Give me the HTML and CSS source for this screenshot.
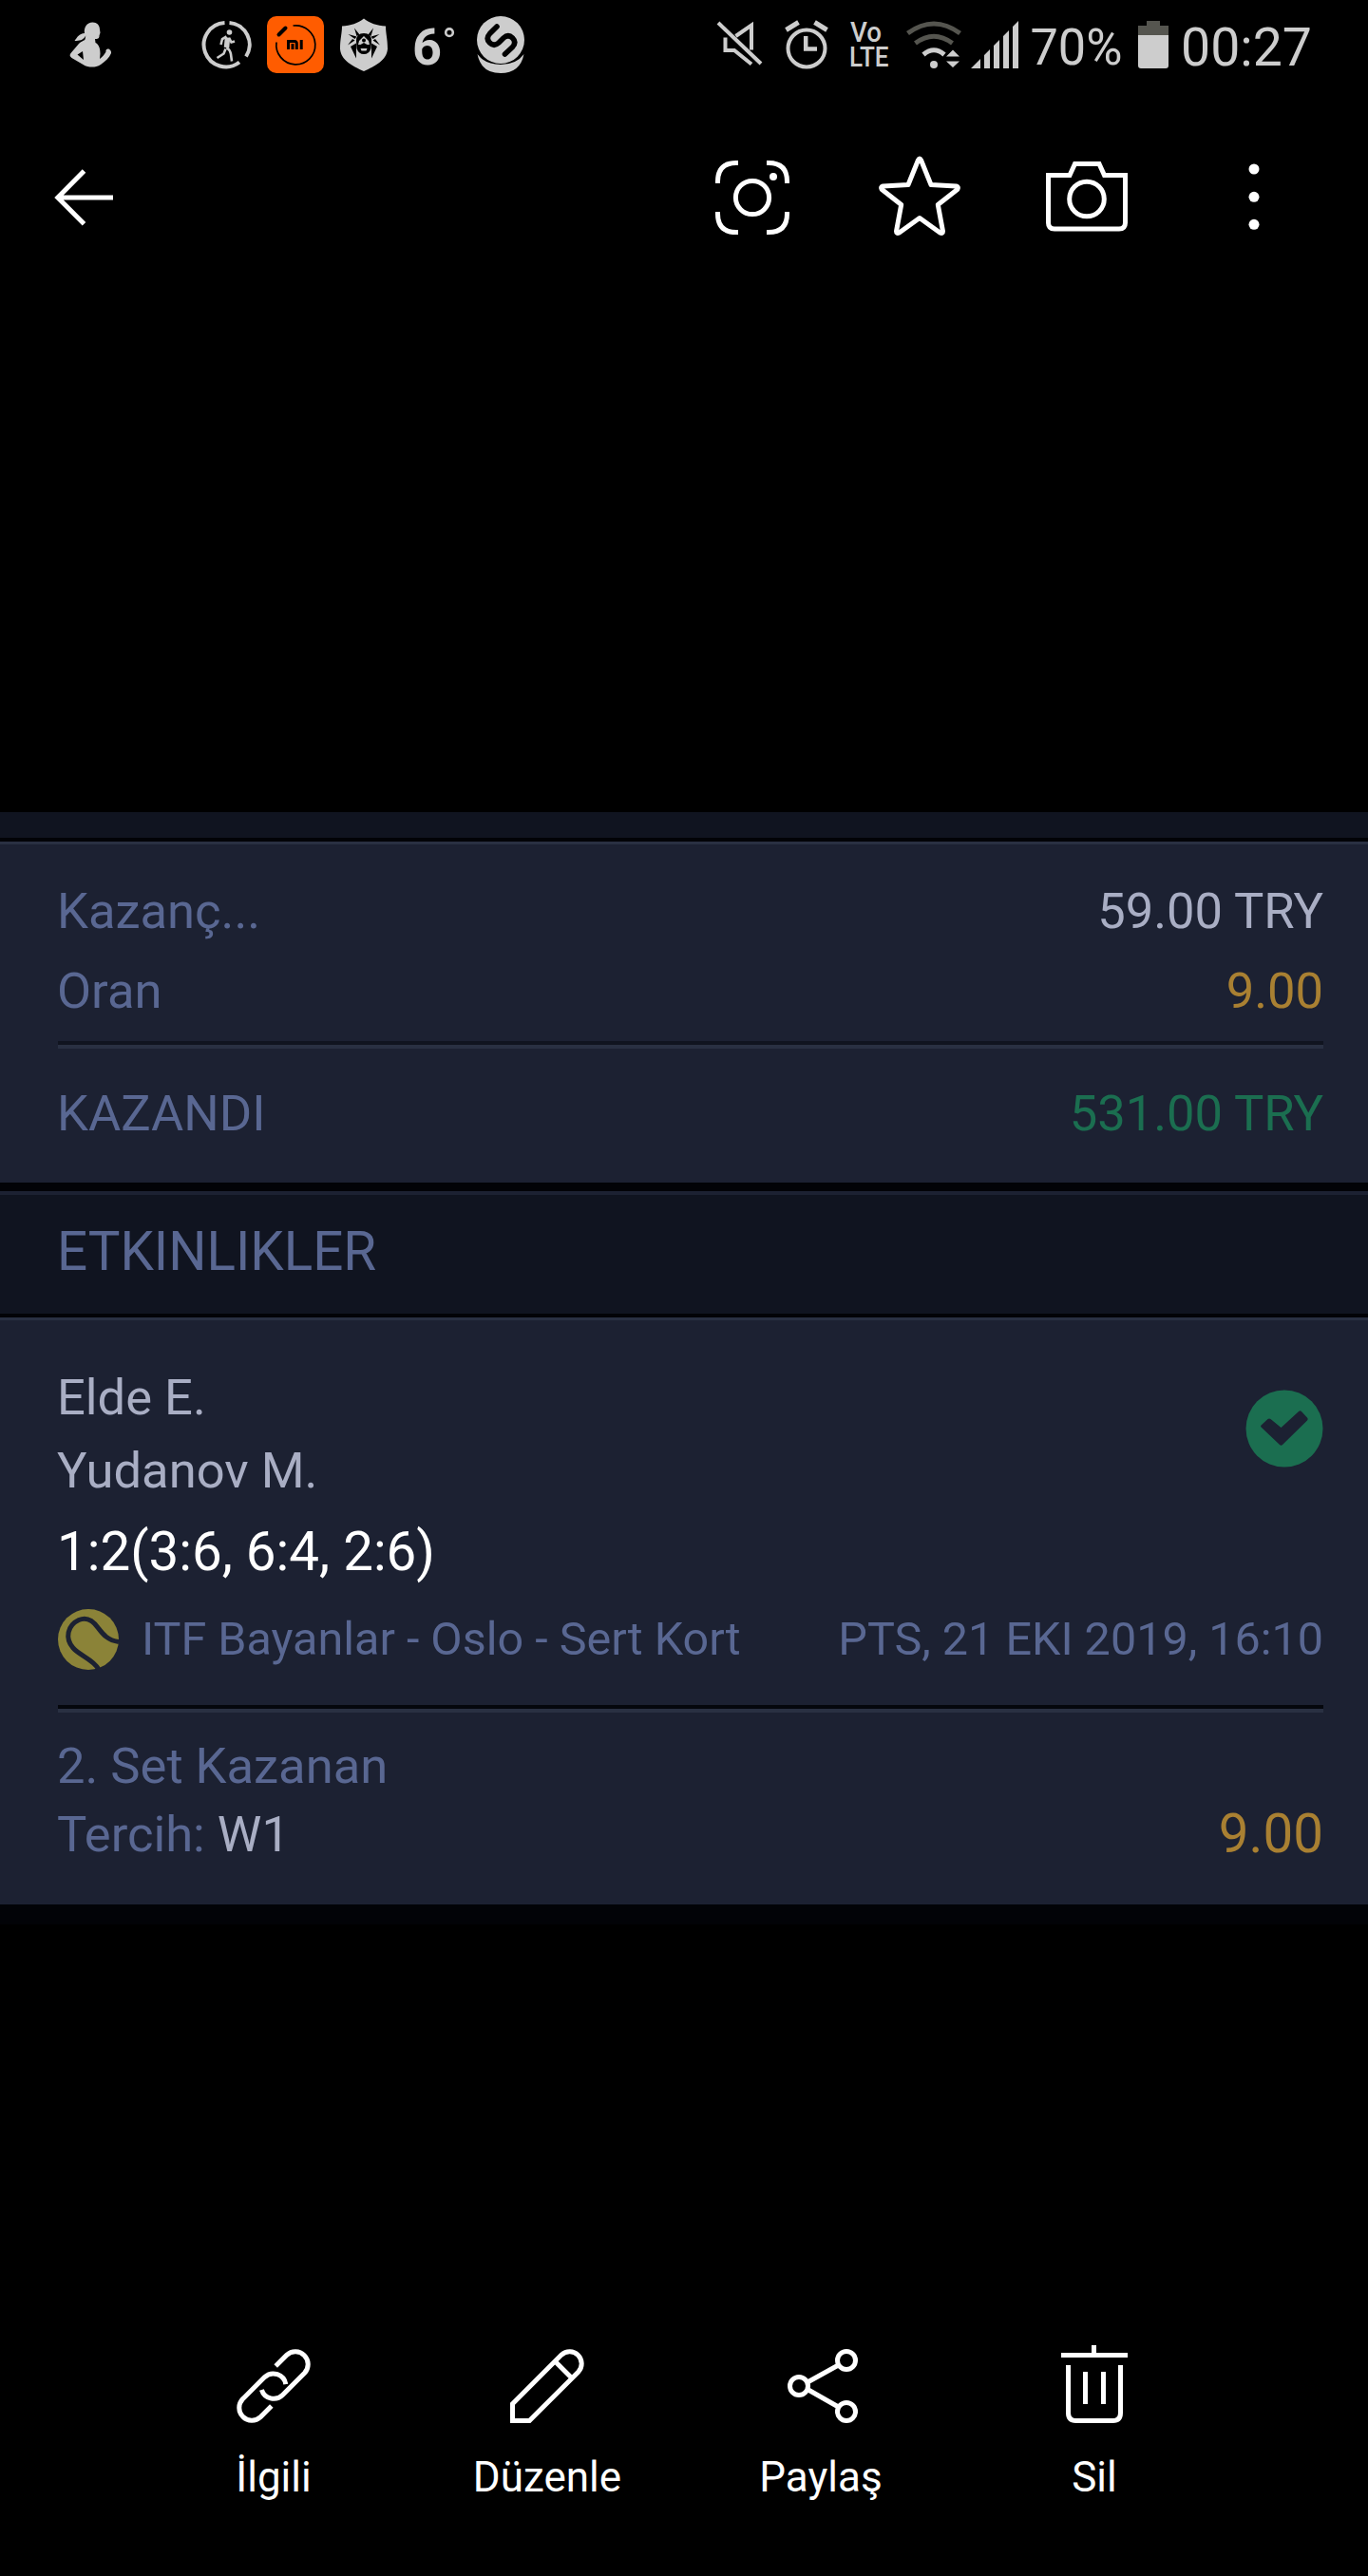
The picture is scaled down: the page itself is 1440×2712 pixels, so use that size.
FILE: index.html
```html
<!DOCTYPE html>
<html lang="tr">
<head>
<meta charset="utf-8">
<title>Galeri</title>
<link rel="stylesheet" href="styles.css">
</head>
<body>
<main class="screen">
  <header class="status">
    <div class="status-group">
      <svg width="48" height="94" viewBox="72 0 48 94" fill="#cdcdcd">
        <path d="M97.500 23.500c4.500 0 7.500 3 7.500 7.500l.5 3.500-1 3c.3 3-2 3.500-4.500 3.500l.5 4c4 2 5 6.500 5 11.500l-.5 5.500c3-2 5-5 6.500-7.500-.5-2.500 1.500-3 3-3 2 1 2.800 3 2.500 4.500-2 5-6 8-11 12-3 2-6 2.500-9 2.500s-7-.5-9.500-2.500L75.500 61c-2-1.500-2.500-3-1-5l8.500-10c3-3 5.500-3 6.500-4.500l.8-4c-3 5-6.500 5.500-11.800 5.500 3-4 4.500-7.500 10.500-8-1-6 2.500-11.500 8.500-11.500zM87 54l-5.500 3.500 6.500 5.500z"/>
      </svg>
      <svg class="gap-lg" width="52" height="94" viewBox="213 0 52 94" fill="none" stroke="#cdcdcd">
        <path d="M241.500 24a23 23 0 0 1 17.500 35.500M252 65.500A23.200 23.200 0 1 1 236.500 24" stroke-width="4"/>
        <circle cx="241.500" cy="34" r="2.800" fill="#cdcdcd" stroke="none"/>
        <path d="M239.500 39.500l-1 10.500" stroke-width="5.500"/>
        <path d="M238.500 38.500l-4.500 2.500-1.500 6M241 40l2.500 4.500 3.500-1M238.500 50c4 3 4 4.500 4.500 7l1 7.500M237.500 51.500l-2 5-7 4.500" stroke-width="2.600"/>
      </svg>
      <svg class="gap-md" width="60" height="94" viewBox="281 0 60 94" fill="none" stroke="#000">
        <rect x="281" y="17" width="60" height="60" rx="10" fill="#ff5c00" stroke="none"/>
        <path d="M308.500 27a20.500 20.500 0 1 1-17.500 17.500" stroke-width="1.700"/>
        <path d="M293.500 36.500l7-7" stroke-width="4" stroke-linecap="round"/>
        <path d="M303.500 52v-8.500h6.500q2.300 0 2.300 2.300V52M308 46v6M317.200 42v10" stroke-width="3"/>
      </svg>
      <svg class="gap-md" width="52" height="94" viewBox="357 0 52 94">
        <path d="M383 19.500c6 5 14 7.500 23 8 0 8 2 13 2 24-1 12-13 18-25 23.500-12-5.500-24-11.500-25-23.500 0-11 2-16 2-24 9-.5 17-3 23-8z" fill="#cdcdcd"/>
        <path d="M373 29.500l5.500 7-3 1.500zM393 29.500l-5.500 7 3 1.500zM366.500 36l9 2.500-2 2.500zM399.500 36l-9 2.500 2 2.500zM366 47.500l5-6.500 2.500 1.500zM400 47.500l-5-6.500-2.500 1.500zM369 49l6-3.500v16zM397 49l-6-3.500v16z" fill="#000"/>
        <path d="M375 43q0-8 8-8t8 8l-.5 8q-2 6-7.500 6t-7.500-6z" fill="#000"/>
        <path d="M378 43l5-5 5 5 1 4h-2.500l-3.500-2-3.500 2H377zM379.500 51h7l-1 2.500h-5z" fill="#cdcdcd"/>
        <circle cx="383" cy="42.500" r="2" fill="#000"/>
      </svg>
      <svg class="gap-lg2" width="50" height="94" viewBox="433 0 50 94" fill="#cdcdcd">
        <text x="434" y="68" class="temp" textLength="31" lengthAdjust="spacingAndGlyphs">6</text>
        <circle cx="473" cy="34.200" r="3.800" fill="none" stroke="#cdcdcd" stroke-width="2.600"/>
      </svg>
      <svg class="gap-sm" width="52" height="94" viewBox="501 0 52 94">
        <circle cx="527" cy="42" r="25" fill="#cdcdcd"/>
        <path d="M502.500 57q8 11 24.500 11t24.500-11q-4 20-24.500 20t-24.500-20z" fill="#cdcdcd"/>
        <path d="M523 28l-7.500 7.500q-4.500 5 0 9.500t9.500 0l5-5q5-4.500 9.500 0t0 9.500l-8 7.500" fill="none" stroke="#000" stroke-width="5.600" stroke-linecap="round"/>
      </svg>
    </div>
    <div class="status-group">
      <svg width="50" height="94" viewBox="754 0 50 94" fill="none" stroke="#cdcdcd" stroke-width="4">
        <path d="M756 24l45 43"/>
        <path d="M774.500 38L791 26.500v26M763.500 39.500V53h9.500l18 14.500"/>
      </svg>
      <svg class="gap-al" width="48" height="94" viewBox="825 0 48 94" fill="none" stroke="#cdcdcd">
        <circle cx="849" cy="51" r="19.500" stroke-width="4"/>
        <path d="M827.500 31.500l13-8M870.500 31.500l-13-8" stroke-width="5"/>
        <path d="M848.200 38v13.500H860" stroke-width="4.500"/>
      </svg>
      <svg class="gap-vo" width="44" height="94" viewBox="894 0 44 94" fill="#cdcdcd">
        <text x="895" y="44" class="volte" textLength="33" lengthAdjust="spacingAndGlyphs">Vo</text>
        <text x="894" y="70" class="volte" textLength="41.500" lengthAdjust="spacingAndGlyphs">LTE</text>
      </svg>
      <svg class="gap-md" width="60" height="94" viewBox="954 0 60 94" fill="none">
        <path d="M955.500 35q27.500-20 55 0M963.500 45.500q19.500-14.500 39 0" stroke="#55554f" stroke-width="5"/>
        <path d="M972 57.500q11-9.500 22 0" stroke="#cdcdcd" stroke-width="5"/>
        <path d="M996 59.500l7-7 7 7zM996 64.500l7 6.500 7-6.500z" fill="#cdcdcd"/>
        <circle cx="983" cy="68" r="4" fill="#cdcdcd"/>
      </svg>
      <svg class="gap-xs" width="52" height="94" viewBox="1021 0 52 94" fill="#cdcdcd">
        <path d="M1022 72l10-10v10zM1036 72V58l6-6v20zM1046 72V48l6-6v30zM1056 72V38l6-6v40zM1066 72V28l6-6v50z"/>
      </svg>
      <svg class="gap-pc" width="98" height="94" viewBox="1084 0 98 94" fill="#cdcdcd">
        <text x="1084.500" y="67.500" class="percent" textLength="97" lengthAdjust="spacingAndGlyphs">70%</text>
      </svg>
      <svg class="gap-md" width="32" height="94" viewBox="1198 0 32 94">
        <path d="M1198 37V27h9v-5h14v5h9v10z" fill="#55554f"/>
        <path d="M1198 37h32v32q0 3-3 3h-26q-3 0-3-3z" fill="#cdcdcd"/>
      </svg>
      <svg class="gap-tm" width="140" height="94" viewBox="1243 0 140 94" fill="#cdcdcd">
        <text x="1243" y="69" class="clock" textLength="138" lengthAdjust="spacingAndGlyphs">00:27</text>
      </svg>
    </div>
  </header>

  <nav class="toolbar">
    <svg width="66" height="80" viewBox="56 168 66 80" fill="none" stroke="#fff" stroke-width="5">
      <path d="M88.500 180L60.800 207.900l27.700 27.800M61 207.900h58"/>
    </svg>
    <div class="tools">
      <svg class="tool-scan" width="80" height="90" viewBox="752 163 80 90" fill="none" stroke="#fff" stroke-width="5">
        <path d="M777 171.500h-2q-19.500 0-19.500 19.500v2M807 171.500h2q19.500 0 19.500 19.500v2M777 244.500h-2q-19.500 0-19.500-19.500v-2M807 244.500h2q19.500 0 19.500-19.500v-2"/>
        <circle cx="792" cy="208" r="17.600"/>
        <circle cx="814" cy="186" r="4" fill="#fff" stroke="none"/>
      </svg>
      <svg class="tool-star" width="90" height="90" viewBox="923 163 90 90" fill="none" stroke="#fff" stroke-width="5" stroke-linejoin="round">
        <path d="M966.500 168.500q1.500-3 3 0L980 194.500l26.500 1.500q3 .8 1.500 3.200L987.300 215.500l5.200 28q0 3-3 1.500L968 229.500l-21.500 15.500q-3 1.500-3-1.500l5.200-28L928 199.200q-1.500-2.400 1.500-3.200l26.500-1.500z"/>
      </svg>
      <svg class="tool-camera" width="88" height="90" viewBox="1100 163 88 90" fill="none" stroke="#fff" stroke-width="5">
        <path d="M1103.500 184.500h22.500l5.500-12h25.500l5.500 12h22v50q0 6.500-6.500 6.500h-68q-6.500 0-6.500-6.500z"/>
        <circle cx="1144" cy="209.500" r="18.300"/>
      </svg>
      <svg class="tool-more" width="12" height="90" viewBox="1314 163 12 90" fill="#fff">
        <circle cx="1320" cy="178" r="5.500"/><circle cx="1320" cy="207.300" r="5.500"/><circle cx="1320" cy="236.300" r="5.500"/>
      </svg>
    </div>
  </nav>

  <article class="slip">
    <div class="strip"></div>
    <section class="summary">
      <div class="row"><span>Kazanç...</span><span class="light">59.00 TRY</span></div>
      <div class="row"><span>Oran</span><span class="odds">9.00</span></div>
      <div class="rule"></div>
      <div class="row won"><span>KAZANDI</span><span class="green">531.00 TRY</span></div>
    </section>
    <h2 class="heading">ETKINLIKLER</h2>
    <section class="event">
      <div class="match">
        <div class="players light"><div>Elde E.</div><div>Yudanov M.</div></div>
        <svg class="check" width="82" height="82" viewBox="0 0 82 82">
          <circle cx="41" cy="41" r="40.500" fill="#1b6e50"/>
          <path d="M16.500 39.500q-1-1 0-2l7-6.500q1.500-1 3 0l11 9 18.500-17q1.500-1.500 3 0l6 6.500q1.500 1.500 0 3L39 58q-1.500 1.500-3 0z" fill="#1c2132"/>
        </svg>
      </div>
      <div class="score">1:2(3:6, 6:4, 2:6)</div>
      <div class="meta">
        <svg class="ball" width="64" height="66" viewBox="0 0 64 66">
          <circle cx="32" cy="33" r="32" fill="#8b8338"/>
          <path d="M64 35.500C52 34 47 27 42 20.500 36 12 29 9.500 22 12.500 10 18 7 32 16 42c7 8 21 12 26.500 22" fill="none" stroke="#1c2132" stroke-width="5"/>
        </svg>
        <span>ITF Bayanlar - Oslo - Sert Kort</span>
        <time>PTS, 21 EKI 2019, 16:10</time>
      </div>
      <div class="rule rule-deep"></div>
      <div class="pick">
        <div class="market">2. Set Kazanan</div>
        <div class="choice"><span>Tercih: <b>W1</b></span><span class="odds big">9.00</span></div>
      </div>
    </section>
    <div class="foot"></div>
  </article>

  <footer class="actions">
    <div class="action">
      <svg width="80" height="84" viewBox="248 2468 80 84" fill="none" stroke="#fff" stroke-width="5">
        <path d="M290.200 2491l11.600-11.600a13.300 13.300 0 0 1 18.800 18.800L297.400 2521.400a13.300 13.300 0 0 1-22-5.500M285.800 2533l-11.600 11.600a13.300 13.300 0 0 1-18.800-18.800L278.600 2502.600a13.300 13.300 0 0 1 22.200 7.500"/>
      </svg>
      <span>İlgili</span>
    </div>
    <div class="action">
      <svg width="80" height="84" viewBox="536 2468 80 84" fill="none" stroke="#fff" stroke-width="5">
        <path d="M539.500 2548.500v-17.800l51.600-51.600a12.600 12.600 0 0 1 17.800 17.800L557.300 2548.500zM585 2486.700l16 16"/>
      </svg>
      <span>Düzenle</span>
    </div>
    <div class="action">
      <svg width="80" height="84" viewBox="824 2468 80 84" fill="none" stroke="#fff" stroke-width="5">
        <circle cx="841" cy="2512" r="9.500"/><circle cx="891" cy="2485" r="9.500"/><circle cx="891" cy="2539" r="9.500"/>
        <path d="M850 2508l32.500-18M850 2515.500l32.500 18.500"/>
      </svg>
      <span>Paylaş</span>
    </div>
    <div class="action">
      <svg width="80" height="84" viewBox="1112 2468 80 84" fill="none" stroke="#fff" stroke-width="5">
        <path d="M1117 2479.500h70M1151.500 2469v9M1124.500 2490v50q0 8.500 8 8.500h39q8 0 8-8.500v-50M1142.500 2497v34M1161.500 2497v34"/>
      </svg>
      <span>Sil</span>
    </div>
  </footer>
</main>
</body>
</html>
```
FILE: styles.css
```css
* { box-sizing: border-box; }
body { margin: 0; background: #000; font-family: Roboto, sans-serif; }
svg { display: block; flex: none; overflow: visible; }

.screen { width: 1440px; height: 2712px; display: flex; flex-direction: column; overflow: hidden; }

.status { height: 94px; padding: 0 57px 0 72px; display: flex; justify-content: space-between; }
.status-group { display: flex; }
.gap-xs { margin-left: 7px; }
.gap-sm { margin-left: 18px; }
.gap-md { margin-left: 16px; }
.gap-lg { margin-left: 93px; }
.gap-lg2 { margin-left: 24px; }
.gap-al, .gap-vo { margin-left: 21px; }
.gap-pc { margin-left: 11px; }
.gap-tm { margin-left: 13px; }
.temp { font-size: 54px; font-weight: 700; }
.volte { font-size: 29px; font-weight: 500; }
.percent { font-size: 53px; }
.clock { font-size: 56px; }

.toolbar { height: 228px; padding: 69px 114px 69px 56px; display: flex; align-items: center; justify-content: space-between; }
.tools { display: flex; }
.tool-star { margin-left: 91px; }
.tool-camera { margin-left: 87px; }
.tool-more { margin-left: 126px; }

.slip { margin-top: 533px; color: #596792; font-size: 52.5px; }
.light { color: #a9aec4; }
.odds { color: #a98032; }
.green { color: #1b6e50; }

.strip { height: 31px; background: #101420; border-bottom: 4px solid #020307; }
.summary { height: 359px; padding: 28px 47px 0 60px; background: #1c2132; border-top: 3px solid #293042; }
.row { display: flex; justify-content: space-between; line-height: 84px; }
.won { margin-top: 26px; }
.rule { height: 8px; margin: 11px 0 0 1px; background: #293042; border-top: 4px solid #101420; }
.rule-deep { margin-top: 36px; border-color: #05070d; }

.heading { margin: 0; height: 138px; padding-left: 60px; background: #101420; border-top: 9px solid #020307; box-shadow: inset 0 4px #1c2132; font-size: 56.5px; font-weight: 400; line-height: 128px; }

.event { height: 622px; padding: 46px 47px 0 60px; background: #1c2132; border-top: 4px solid #020307; box-shadow: inset 0 3px #293042; }
.match { display: flex; justify-content: space-between; line-height: 77px; }
.check { margin-top: 30px; }
.score { padding-top: 5px; color: #fff; font-size: 56.5px; line-height: 84px; }
.meta { display: flex; margin-top: 17px; font-size: 48.5px; line-height: 66px; }
.ball { margin: 0 24px 0 1px; }
.meta time { margin-left: auto; }
.pick { margin-top: 20px; line-height: 72px; }
.choice { display: flex; justify-content: space-between; }
.choice b { color: #a9aec4; font-weight: 400; }
.big { font-size: 56.5px; }
.foot { height: 21px; background: #020307; }

.actions { margin: 442px 144px 0; display: grid; grid-template-columns: repeat(4, 1fr); color: #fff; font-size: 44px; }
.action { display: flex; flex-direction: column; align-items: center; line-height: 60px; }
.action span { margin-top: 26px; }
```
